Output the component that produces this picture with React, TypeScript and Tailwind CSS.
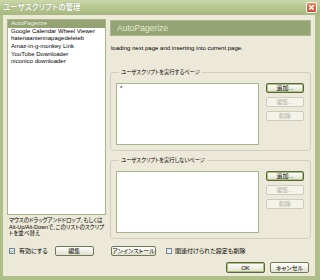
import React from "react";

function Btn({
  children,
  className = "",
  def = false,
  disabled = false,
}: {
  children: React.ReactNode;
  className?: string;
  def?: boolean;
  disabled?: boolean;
}) {
  const base =
    "flex items-center justify-center rounded-[2px] border text-[6px] leading-none ";
  const look = disabled
    ? "border-[#cdcbbd] bg-[#f4f3ea] text-[#b3b0a2]"
    : def
    ? "border-[#59683f] bg-linear-to-b from-white to-[#e3e0cf] text-black shadow-[inset_0_0_0_1px_#a8c27a]"
    : "border-[#6d7a55] bg-linear-to-b from-white to-[#e3e0cf] text-black";
  return <div className={base + look + " " + className}>{children}</div>;
}

function CheckBox({ checked }: { checked: boolean }) {
  return (
    <div className="w-[6px] h-[6px] border border-[#6f84a4] bg-linear-to-br from-[#dcdcd4] to-white flex items-center justify-center">
      {checked && (
        <svg width="5" height="5" viewBox="0 0 5 5">
          <path d="M0.8 2.4 L2 3.6 L4.3 1.2" stroke="#22a122" strokeWidth="1.1" fill="none" />
        </svg>
      )}
    </div>
  );
}

function Group({ label, entries }: { label: string; entries: string[] }) {
  return (
    <fieldset className="border border-[#d0cfbf] rounded-[3px] px-[5px] pt-[7px] pb-[5px] min-w-0">
      <legend className="ml-[3px] px-[2px] text-[5.3px] leading-[7px] text-black">{label}</legend>
      <div className="flex">
        <div className="w-[143px] h-[62px] border border-[#a6b68b] bg-white pt-[1px] pl-[3px]">
          {entries.map((e) => (
            <div key={e} className="text-[6px] leading-[7px]">
              {e}
            </div>
          ))}
        </div>
        <div className="ml-[7px] w-[38px] flex flex-col gap-[4px]">
          <Btn def className="h-[10px]">追加...</Btn>
          <Btn disabled className="h-[10px]">編集...</Btn>
          <Btn disabled className="h-[10px]">削除</Btn>
        </div>
      </div>
    </fieldset>
  );
}

export default function App() {
  const items = [
    "AutoPagerize",
    "Google Calendar Wheel Viewer",
    "hatenaantennapagedeleteb",
    "Amaz-in-g-monkey Link",
    "YouTube Downloader",
    "niconico downloader",
  ];
  return (
    <div className="w-[320px] h-[280px] overflow-hidden flex flex-col bg-[#aebf89] font-['Liberation_Sans','Noto_Sans_CJK_JP',sans-serif] [font-feature-settings:'palt']">
      {/* title bar */}
      <div className="h-[15px] shrink-0 flex items-center pl-[3px] pr-[3px] bg-linear-to-b from-[#cbd8aa] via-[#b6c78f] to-[#a6b880]">
        <span className="text-[7.5px] font-bold text-white [text-shadow:0_0_1px_#6f7d55]">
          ユーザスクリプトの管理
        </span>
        <div className="ml-auto w-[11px] h-[11px] rounded-[2px] border border-white bg-linear-to-b from-[#ec8a63] to-[#c9472b] flex items-center justify-center">
          <svg width="7" height="7" viewBox="0 0 7 7">
            <path d="M1.3 1.3 L5.7 5.7 M5.7 1.3 L1.3 5.7" stroke="white" strokeWidth="1.4" />
          </svg>
        </div>
      </div>

      {/* body */}
      <div className="flex-1 ml-[3px] mr-[5px] mb-[4px] bg-[#ece9d8] px-[4px] pt-[4px] flex flex-col text-black">
        <div className="flex gap-[4px]">
          {/* left column */}
          <div className="w-[99px] flex flex-col">
            <div className="h-[196px] border border-[#a6b68b] bg-white">
              {items.map((it, i) => (
                <div
                  key={it}
                  className={
                    "h-[7.7px] leading-[7.7px] text-[6px] pl-[3px] whitespace-nowrap " +
                    (i === 0 ? "bg-[#95a272] text-[#eef0e3]" : "text-black")
                  }
                >
                  {it}
                </div>
              ))}
            </div>
            <div className="mt-[2px] ml-[2px] text-[5.5px] leading-[6.5px] whitespace-nowrap">
              マウスのドラッグアンドドロップ、もしくは
              <br />
              Alt-Up/Alt-Downで、このリストのスクリプ
              <br />
              トを並べ替え
            </div>
          </div>

          {/* right column */}
          <div className="w-[201px] flex flex-col">
            <div className="mt-[1px] h-[16px] border border-[#aab88f] bg-[#95a475] flex items-center pl-[6px]">
              <span className="text-[8.5px] text-[#e4e9d4] leading-none">AutoPagerize</span>
            </div>
            <div className="mt-[8.5px] pl-[1px] text-[6px] leading-[7px] whitespace-nowrap">
              loading next page and inserting into current page.
            </div>
            <div className="mt-[17.5px]">
              <Group label="ユーザスクリプトを実行するページ" entries={["*"]} />
            </div>
            <div className="mt-[6px]">
              <Group label="ユーザスクリプトを実行しないページ" entries={[]} />
            </div>
          </div>
        </div>

        {/* row B */}
        <div className="mt-[7px] flex items-center h-[10px]">
          <div className="w-[99px] flex items-center">
            <div className="ml-[2px]">
              <CheckBox checked />
            </div>
            <span className="ml-[4px] text-[6px] leading-none">有効にする</span>
            <Btn className="ml-[7px] w-[39px] h-[10px]">編集</Btn>
          </div>
          <div className="ml-[4px] flex items-center">
            <Btn className="ml-[1px] w-[45px] h-[10px]">アンインストール</Btn>
            <div className="ml-[10px]">
              <CheckBox checked={false} />
            </div>
            <span className="ml-[3px] text-[6px] leading-none">関連付けられた設定も削除</span>
          </div>
        </div>

        {/* row C */}
        <div className="mt-[6px] flex justify-end gap-[5px] pr-[2px]">
          <Btn def className="w-[39px] h-[11px]">OK</Btn>
          <Btn className="w-[39px] h-[11px]">キャンセル</Btn>
        </div>
      </div>
    </div>
  );
}
